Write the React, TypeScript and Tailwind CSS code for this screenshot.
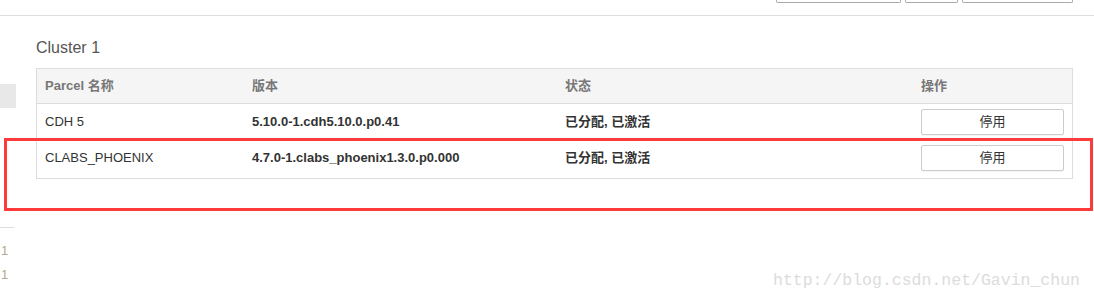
const font = { fontFamily: '"Liberation Sans", Arial, "Noto Sans CJK SC", sans-serif' };

const rows = [
  { name: "CDH 5", version: "5.10.0-1.cdh5.10.0.p0.41", status: "已分配, 已激活" },
  { name: "CLABS_PHOENIX", version: "4.7.0-1.clabs_phoenix1.3.0.p0.000", status: "已分配, 已激活" },
];

function ParcelTable() {
  return (
    <div className="w-[1037px] border border-[#dddddd] text-[13px] text-[#333]">
      <div className="grid grid-cols-[207px_313px_356px_159px] h-[35px] items-center bg-[#f5f5f5] border-b border-[#dddddd] font-bold text-[#777]">
        <div className="px-[8px]">Parcel 名称</div>
        <div className="px-[8px]">版本</div>
        <div className="px-[8px]">状态</div>
        <div className="px-[8px]">操作</div>
      </div>
      {rows.map((r, i) => (
        <div
          key={r.name}
          className={
            "grid grid-cols-[207px_313px_356px_159px] items-center " +
            (i === 0 ? "h-[36px]" : "h-[38px] pb-[3px] border-t border-[#dddddd]")
          }
        >
          <div className="px-[8px]">{r.name}</div>
          <div className="px-[8px] font-bold">{r.version}</div>
          <div className="px-[8px] font-bold">{r.status}</div>
          <div className="px-[8px]">
            <button className="w-[143px] h-[26px] border border-[#cccccc] rounded-[2px] bg-white text-[13px] text-[#333] shadow-[0_1px_1px_rgba(0,0,0,0.05)]">
              停用
            </button>
          </div>
        </div>
      ))}
    </div>
  );
}

export default function App() {
  return (
    <div className="relative w-[1094px] h-[303px] bg-white overflow-hidden" style={font}>
      {/* top toolbar, scrolled mostly out of view */}
      <div className="h-[16px] border-b border-[#dddddd] flex justify-end items-start pr-[21px] gap-[4px]">
        <div className="w-[125px] h-[3px] border-x border-b border-[#aaaaaa] rounded-b-[2px]" />
        <div className="w-[53px] h-[3px] border-x border-b border-[#aaaaaa] rounded-b-[2px]" />
        <div className="w-[111px] h-[3px] border-x border-b border-[#aaaaaa] rounded-b-[2px]" />
      </div>

      <div className="flex">
        {/* left sidebar edge */}
        <div className="w-[16px] flex flex-col">
          <div className="mt-[68px] h-[24px] w-[16px] bg-[#e8e8e8]" />
          <div className="mt-[119px] h-px w-[14px] bg-[#dddddd]" />
          <div className="mt-[11px] pl-[1px] text-[13px] leading-[24px] text-[#b8a58f]">
            <div>1</div>
            <div>1</div>
          </div>
        </div>

        {/* main content */}
        <div className="pl-[20px]">
          <div className="mt-[22px] text-[16px] leading-[20px] text-[#555]">Cluster 1</div>
          <div className="mt-[10px]">
            <ParcelTable />
          </div>
        </div>
      </div>

      {/* red annotation box */}
      <div className="absolute left-[4px] top-[138px] w-[1089px] h-[73px] border-[3px] border-[#ff3a3a]" />

      {/* watermark */}
      <div
        className="absolute left-[773px] top-[272px] text-[16.5px] leading-[18px] text-[#dcdcdc]"
        style={{ fontFamily: '"Liberation Mono", "Courier New", monospace' }}
      >
        http://blog.csdn.net/Gavin_chun
      </div>
    </div>
  );
}
